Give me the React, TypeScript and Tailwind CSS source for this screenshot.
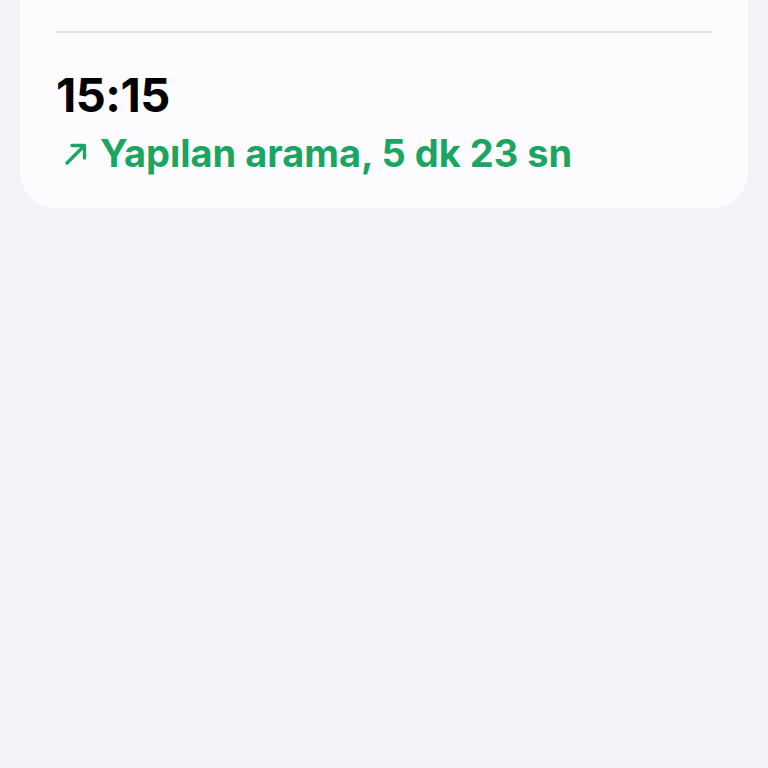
export default function App() {
  return (
    <div className="min-h-screen bg-[#f2f2f7]" style={{ fontFamily: 'Inter, "Noto Sans", sans-serif' }}>
      <div className="mx-[20px] rounded-b-[36px] bg-[#fcfcfe] px-[36px] pb-[36px]">
        <div className="h-[31px]" />
        <div className="border-t-2 border-[#e3e3e8]" />
        <div className="mt-[38px] text-[47px] font-bold leading-none tracking-[-0.5px] text-black">15:15</div>
        <div className="mt-[16px] flex items-center gap-[13px] text-[38px] font-bold leading-none text-[#1ba562]">
          <svg width="22" height="22" viewBox="0 0 22 22" fill="none" stroke="currentColor" strokeWidth="3.4" strokeLinecap="round" strokeLinejoin="round" className="ml-[9px] mt-[1px]">
            <path d="M2 20 L19 3" />
            <path d="M7 2.5 H19.5 V15" />
          </svg>
          <span>Yapılan arama, 5 dk 23 sn</span>
        </div>
      </div>
    </div>
  )
}
